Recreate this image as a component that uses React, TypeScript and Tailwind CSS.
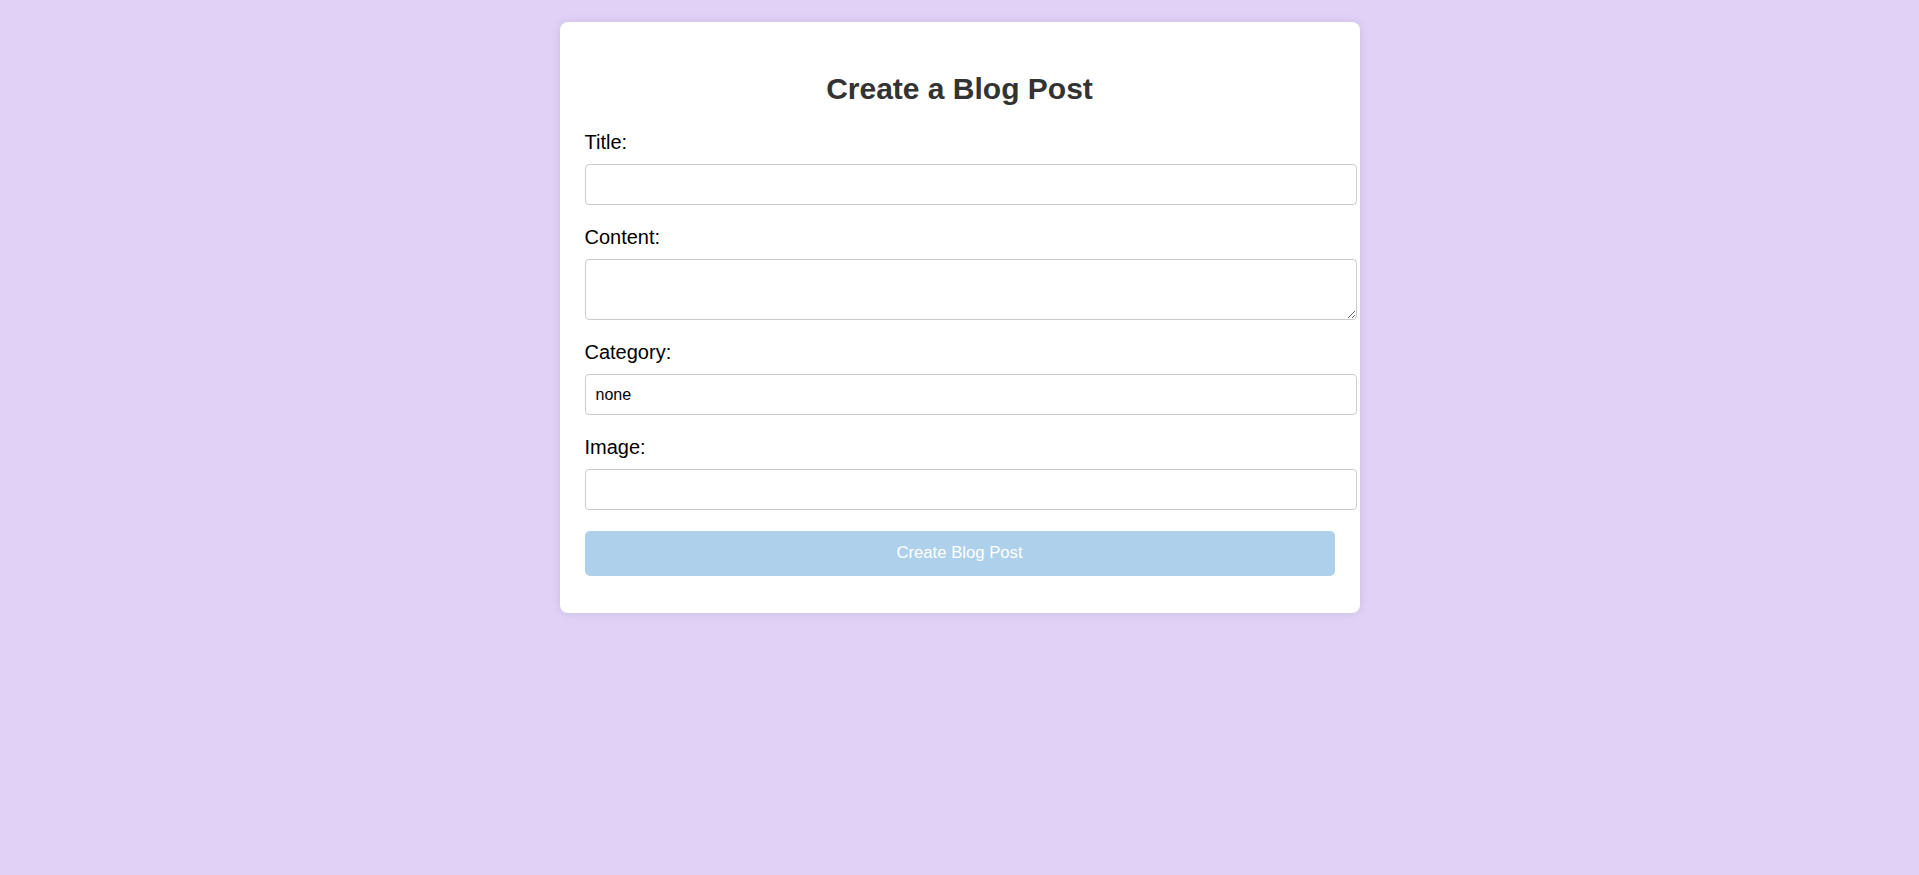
import { useState } from 'react';

const fieldClass =
  'block w-[calc(100%+22px)] h-[41px] px-[10px] border border-[#cccccc] rounded-[4px] bg-white text-[16px] text-black focus:outline-none';

const labelClass = 'block pt-[1px] mb-[10px] text-[20px] leading-[23px] text-black';

export default function App() {
  const [title, setTitle] = useState('');
  const [content, setContent] = useState('');
  const [category, setCategory] = useState('none');
  const [image, setImage] = useState('');

  const canSubmit = title.trim() !== '' && content.trim() !== '';

  return (
    <div className="min-h-[875px] bg-[#e0d2f7] pt-[22px] font-['Liberation_Sans',Arial,sans-serif]">
      <div className="mx-auto w-[800px] bg-white rounded-[8px] shadow-[0_0_10px_rgba(0,0,0,0.1)] px-[25px] pt-[25px] pb-[37px]">
        <h2 className="mt-[25px] mb-[24px] text-center text-[30px] leading-[34px] font-bold text-[#333333]">
          Create a Blog Post
        </h2>

        <form onSubmit={(e) => e.preventDefault()}>
          <div className="mb-[20px]">
            <label className={labelClass}>Title:</label>
            <input
              type="text"
              value={title}
              onChange={(e) => setTitle(e.target.value)}
              className={fieldClass}
            />
          </div>

          <div className="mb-[20px]">
            <label className={labelClass}>Content:</label>
            <textarea
              value={content}
              onChange={(e) => setContent(e.target.value)}
              className="block w-[calc(100%+22px)] h-[61px] p-[10px] border border-[#cccccc] rounded-[4px] bg-white text-[16px] text-black resize-y focus:outline-none"
            />
          </div>

          <div className="mb-[20px]">
            <label className={labelClass}>Category:</label>
            <select
              value={category}
              onChange={(e) => setCategory(e.target.value)}
              className={`${fieldClass} appearance-none`}
            >
              <option value="none">none</option>
              <option value="tech">tech</option>
              <option value="travel">travel</option>
              <option value="food">food</option>
            </select>
          </div>

          <div className="mb-[21px]">
            <label className={labelClass}>Image:</label>
            <input
              type="text"
              value={image}
              onChange={(e) => setImage(e.target.value)}
              className={fieldClass}
            />
          </div>

          <button
            type="submit"
            disabled={!canSubmit}
            className="block w-full h-[45px] pb-[2px] rounded-[5px] bg-[#aed0eb] text-white text-[16.7px] enabled:bg-[#3498db] enabled:hover:bg-[#2980b9]"
          >
            Create Blog Post
          </button>
        </form>
      </div>
    </div>
  );
}
